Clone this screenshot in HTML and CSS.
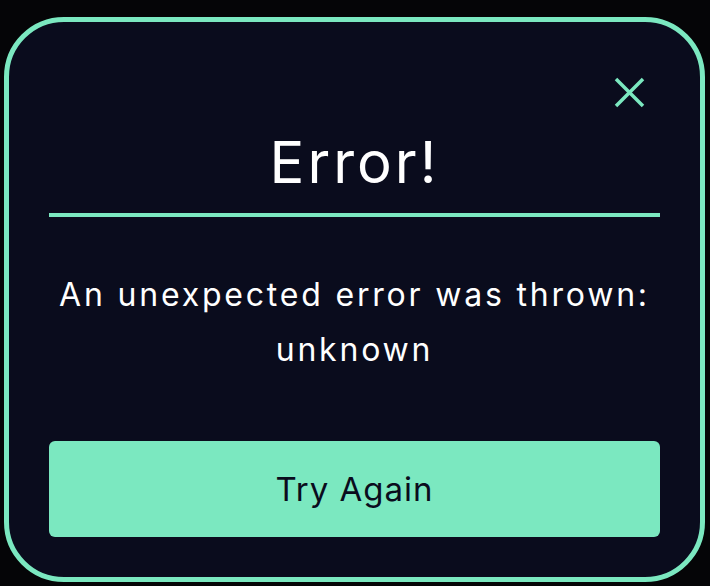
FILE: index.html
```html
<!DOCTYPE html>
<html lang="en">

<head>
  <meta charset="UTF-8">
  <meta name="viewport" content="width=device-width, initial-scale=1.0">
  <title>Error</title>
  <link rel="stylesheet" href="styles.css">
</head>

<body>
  <!-- error dialog -->
  <div class="modal">
    <div class="modal-top">
      <button class="close-btn" aria-label="Close">
        <svg width="31" height="31" viewBox="0 0 31 31">
          <path d="M2 2 L29 29 M29 2 L2 29" stroke="#7be8c0" stroke-width="3.5" fill="none" />
        </svg>
      </button>
    </div>
    <h1 class="modal-title">Error!</h1>
    <div class="divider"></div>
    <p class="modal-text">An unexpected error was thrown:<br>unknown</p>
    <button class="retry-btn">Try Again</button>
  </div>
</body>

</html>
```

FILE: styles.css
```css
/* page */
body {
  margin: 0;
  height: 100vh;
  background-color: #050507;
  font-family: Inter, "Open Sans", sans-serif;
}

/* dialog box */
.modal {
  box-sizing: border-box;
  width: 701px;
  height: 565px;
  margin: 17px 0 0 4px;
  padding: 55px 40px 40px;
  border: 5px solid #7be8c0;
  border-radius: 60px;
  background-color: #0a0c1d;
  display: flex;
  flex-direction: column;
}

.modal-top {
  display: flex;
  justify-content: flex-end;
  padding-right: 15px;
}

.close-btn {
  padding: 0;
  border: none;
  background: none;
  width: 31px;
  height: 31px;
  cursor: pointer;
}

.close-btn svg {
  display: block;
}

.modal-title {
  margin: 19px 0 0;
  font-size: 58px;
  font-weight: 400;
  line-height: 70px;
  letter-spacing: 3px;
  text-align: center;
  color: #ffffff;
}

.divider {
  height: 4px;
  margin-top: 16px;
  background-color: #7be8c0;
}

.modal-text {
  margin: 50px 0 0;
  font-size: 32px;
  line-height: 55px;
  letter-spacing: 2.8px;
  text-align: center;
  color: #ffffff;
}

/* retry button */
.retry-btn {
  margin-top: auto;
  height: 96px;
  border: none;
  border-radius: 6px;
  background-color: #7be8c0;
  color: #0a0c1d;
  font-family: inherit;
  font-size: 33px;
  letter-spacing: 1px;
  cursor: pointer;
}
```
